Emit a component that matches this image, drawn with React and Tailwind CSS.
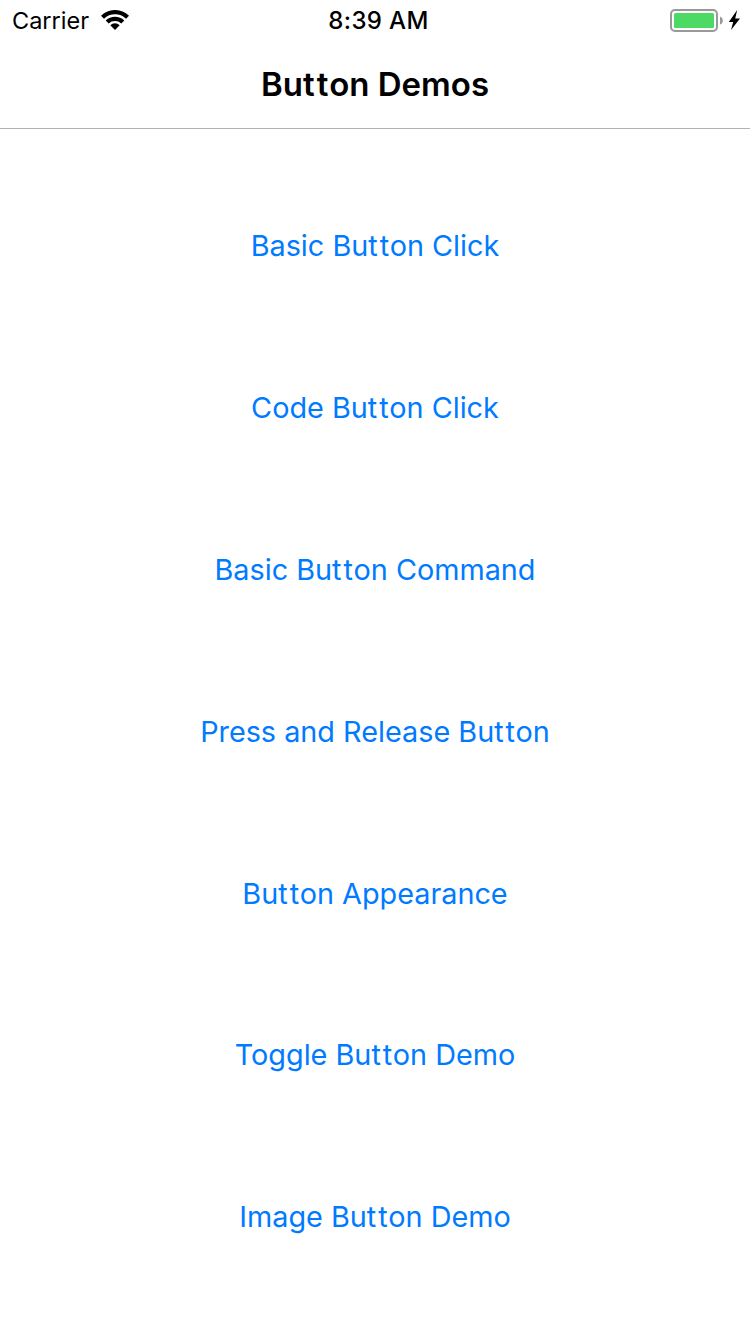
const demos = [
  "Basic Button Click",
  "Code Button Click",
  "Basic Button Command",
  "Press and Release Button",
  "Button Appearance",
  "Toggle Button Demo",
  "Image Button Demo",
];

// Opens up the double t, which Inter sets very tight.
function Label({ children }) {
  const parts = children.split("tt");
  return parts.map((part, i) => (
    <span key={i}>
      {i > 0 && <><span className="tracking-[0.07em]">t</span><span className="tracking-[0.02em]">t</span></>}
      {part}
    </span>
  ));
}

export default function App() {
  return (
    <div className="flex h-[1334px] w-[750px] flex-col bg-white font-['Inter',sans-serif] text-black">
      <header className="h-[129px] border-b border-[#b2b2b2]">
        <div className="grid h-10 grid-cols-3 items-center pl-3 pr-2.5 text-[24px] leading-[38px]">
          <div className="flex items-center gap-3">
            <span className="pt-0.5 text-[23.5px]">Carrier</span>
            <svg width="28" height="20" viewBox="0 0 28 20">
              <path d="M0 5.7A20 20 0 0 1 28 5.7L25 8.8A15.8 15.8 0 0 0 3 8.8Z" />
              <path d="M4.7 10.4A13.4 13.4 0 0 1 23.3 10.4L20.3 13.5A9.2 9.2 0 0 0 7.7 13.5Z" />
              <path d="M9.3 15.2A6.7 6.7 0 0 1 18.7 15.2L14 20Z" />
            </svg>
          </div>
          <span className="pl-[5px] pt-0.5 text-center font-medium tracking-[0.35px]">8:39 AM</span>
          <div className="flex items-center justify-end">
            <svg width="72" height="24" viewBox="0 0 72 24">
              <rect x="3" y="2" width="46" height="21" rx="4" fill="none" stroke="#999" strokeWidth="2" />
              <rect x="6" y="5" width="40" height="15" rx="1.5" fill="#4cd964" />
              <path d="M52 8.5Q54.8 9.5 54.8 12.5Q54.8 15.5 52 16.5Z" fill="#999" />
              <path d="M69.2 2L60.8 14H65.2L63 22L72 10.4H67.2Z" />
            </svg>
          </div>
        </div>
        <h1 className="text-center text-[33px] font-semibold leading-[88px]"><Label>Button Demos</Label></h1>
      </header>
      <main className="flex flex-col pt-[36.2px]">
        {demos.map((label) => (
          <button key={label} className="h-[161.8px] text-[28.8px] text-[#007aff]"><Label>{label}</Label></button>
        ))}
      </main>
    </div>
  );
}
